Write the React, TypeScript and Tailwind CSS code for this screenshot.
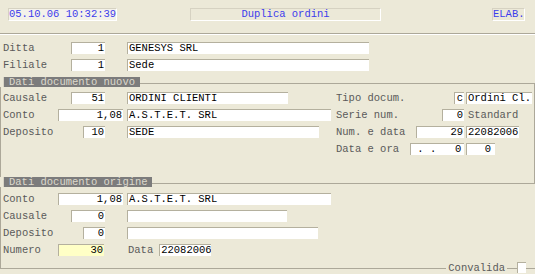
import clsx from 'clsx';
import type { ReactNode } from 'react';

function Box({ className, right, children }: { className: string; right?: boolean; children?: ReactNode }) {
  return (
    <div
      className={clsx(
        'h-[12px] shrink-0 overflow-hidden whitespace-pre border-t border-l border-t-[#b4b09e] border-l-[#b4b09e] leading-[11px] text-black',
        right ? 'pr-[1px] text-right' : 'pl-[1px]',
        className
      )}
    >
      {children}
    </div>
  );
}

function Label({ className, children }: { className: string; children: ReactNode }) {
  return <span className={clsx('shrink-0 whitespace-pre leading-[12px] text-[#5a5a5a]', className)}>{children}</span>;
}

function Row({ children }: { children: ReactNode }) {
  return <div className="flex h-[12px] items-center">{children}</div>;
}

export default function App() {
  return (
    <div className="h-[274px] w-[535px] overflow-hidden bg-[#ece9d8] font-['Liberation_Mono',monospace] text-[10.5px]">
      {/* barra titolo */}
      <div className="flex h-[34px] border-b border-[#aca899] pl-[8px] pt-[8px]">
        <div className="h-[13px] w-[109px] whitespace-pre border border-t-[#d6d2c2] border-l-[#d6d2c2] border-b-white border-r-white bg-[#f4f2ea] leading-[11px] text-[#3c3cec]">
          05.10.06 10:32:39
        </div>
        <div className="ml-[73px] h-[13px] w-[191px] whitespace-pre border border-t-[#d6d2c2] border-l-[#d6d2c2] border-b-white border-r-white text-center leading-[11px] text-[#3c3cec]">
          Duplica ordini
        </div>
        <div className="ml-[111px] h-[13px] w-[33px] whitespace-pre border border-t-[#d6d2c2] border-l-[#d6d2c2] border-b-white border-r-white leading-[11px] text-[#3c3cec]">
          ELAB.
        </div>
      </div>
      <div className="h-px bg-white" />

      <div className="mt-[7px] flex flex-col gap-[5px]">
        <Row>
          <Label className="w-[71px] pl-[3px]">Ditta</Label>
          <Box right className="w-[34px] bg-white">1</Box>
          <Box className="ml-[22px] w-[242px] bg-white">GENESYS SRL</Box>
        </Row>
        <Row>
          <Label className="w-[71px] pl-[3px]">Filiale</Label>
          <Box right className="w-[34px] bg-white">1</Box>
          <Box className="ml-[22px] w-[242px] bg-white">Sede</Box>
        </Row>
      </div>

      {/* Dati documento nuovo */}
      <div className="mt-[6px] flex h-[10px]">
        <div className="ml-[3px] w-[137px] whitespace-pre border-l border-[#d8d4c6] bg-[#7c7c7c] pl-[5px] leading-[10px] text-[#dcd9cc]">
          Dati documento nuovo
        </div>
        <div className="mt-[6px] h-[4px] flex-1 border-t border-r border-[#aca899]" />
      </div>
      <div className="flex h-[90px] border-l border-r border-[#aca899]">
        <div className="mt-[5px] flex w-[335px] flex-col gap-[5px]">
          <Row>
            <Label className="w-[70px] pl-[2px]">Causale</Label>
            <Box right className="w-[34px] bg-white">51</Box>
            <Box className="ml-[22px] w-[161px] bg-white">ORDINI CLIENTI</Box>
          </Row>
          <Row>
            <Label className="w-[57px] pl-[2px]">Conto</Label>
            <Box right className="w-[65px] bg-white">1,08</Box>
            <Box className="ml-[4px] w-[204px] bg-white">A.S.T.E.T. SRL</Box>
          </Row>
          <Row>
            <Label className="w-[82px] pl-[2px]">Deposito</Label>
            <Box right className="w-[22px] bg-white">10</Box>
            <Box className="ml-[22px] w-[192px] bg-white">SEDE</Box>
          </Row>
        </div>
        <div className="mt-[5px] flex flex-col gap-[5px]">
          <Row>
            <Label className="w-[118px]">Tipo docum.</Label>
            <Box right className="w-[10px] bg-white">c</Box>
            <Box className="ml-[2px] w-[66px] bg-white">Ordini Cl.</Box>
          </Row>
          <Row>
            <Label className="w-[106px]">Serie num.</Label>
            <Box right className="w-[22px] bg-white">0</Box>
            <Label className="ml-[4px]">Standard</Label>
          </Row>
          <Row>
            <Label className="w-[80px]">Num. e data</Label>
            <Box right className="w-[48px] bg-white">29</Box>
            <Box className="ml-[2px] w-[53px] bg-white">22082006</Box>
          </Row>
          <Row>
            <Label className="w-[74px]">Data e ora</Label>
            <Box right className="w-[54px] bg-white pr-[3px]">{' . .   0'}</Box>
            <Box right className="ml-[2px] w-[29px] bg-white pr-[4px]">0</Box>
          </Row>
        </div>
      </div>

      {/* Dati documento origine */}
      <div className="flex h-[10px]">
        <div className="ml-[3px] w-[149px] whitespace-pre border-l border-[#d8d4c6] bg-[#7c7c7c] pl-[5px] leading-[10px] text-[#dcd9cc]">
          Dati documento origine
        </div>
        <div className="h-[7px] flex-1 border-b border-r border-[#aca899]" />
      </div>
      <div className="relative flex h-[82px] flex-col border-l border-b border-[#aca899] pt-[6px]">
        <div className="flex flex-col gap-[5px]">
          <Row>
            <Label className="w-[57px] pl-[2px]">Conto</Label>
            <Box right className="w-[65px] bg-white">1,08</Box>
            <Box className="ml-[4px] w-[204px] bg-white">A.S.T.E.T. SRL</Box>
          </Row>
          <Row>
            <Label className="w-[70px] pl-[2px]">Causale</Label>
            <Box right className="w-[34px] bg-white">0</Box>
            <Box className="ml-[22px] w-[160px] bg-white" />
          </Row>
          <Row>
            <Label className="w-[82px] pl-[2px]">Deposito</Label>
            <Box right className="w-[22px] bg-white">0</Box>
            <Box className="ml-[22px] w-[191px] bg-white" />
          </Row>
          <Row>
            <Label className="w-[57px] pl-[2px]">Numero</Label>
            <Box right className="w-[46px] bg-[#ffffc6]">30</Box>
            <Label className="ml-[24px]">Data</Label>
            <Box className="ml-[6px] w-[52px] border-l-[#7a7a7a] bg-white">
              22082006
              <span className="-ml-px inline-block h-[10px] w-px bg-black align-top" />
            </Box>
          </Row>
        </div>
        {/* convalida sopra la cornice */}
        <span className="absolute right-[28px] -bottom-[6px] whitespace-pre bg-[#ece9d8] px-[2px] leading-[12px] text-[#5a5a5a]">
          Convalida
        </span>
        <span className="absolute right-[9px] -bottom-[5px] h-[11px] w-[9px] border-t border-l border-[#b4b09e] bg-white" />
      </div>
    </div>
  );
}
